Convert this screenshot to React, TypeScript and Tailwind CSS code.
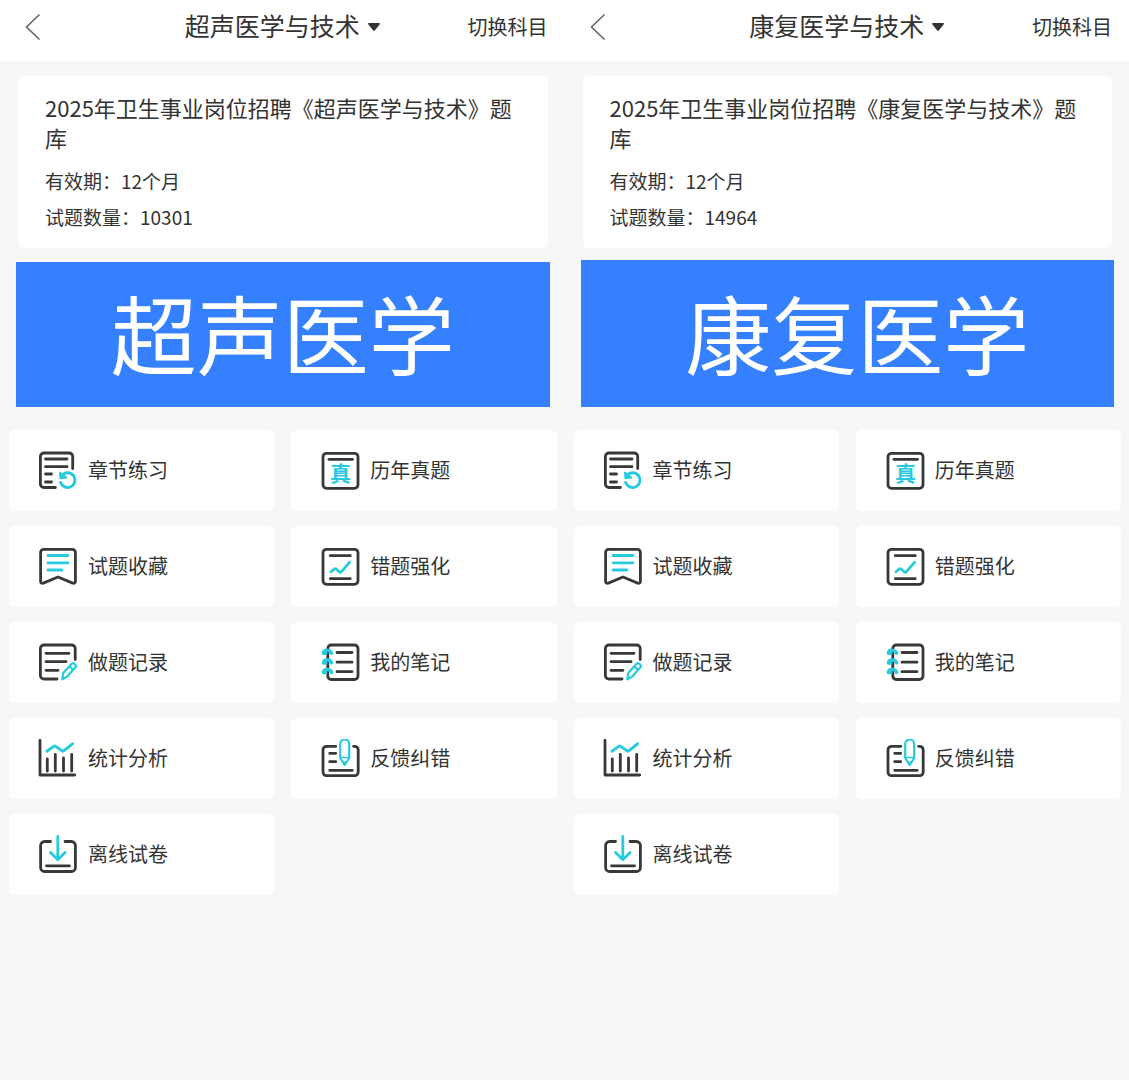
import type { ReactNode } from "react"
import clsx from "clsx"

interface Subject {
  name: string
  title: string
  period: string
  count: number
  banner: string
  bannerClass: string
}

const subjects: Subject[] = [
  {
    name: "超声医学与技术",
    title: "2025年卫生事业岗位招聘《超声医学与技术》题库",
    period: "12个月",
    count: 10301,
    banner: "超声医学",
    bannerClass: "mt-[14px] pt-5",
  },
  {
    name: "康复医学与技术",
    title: "2025年卫生事业岗位招聘《康复医学与技术》题库",
    period: "12个月",
    count: 14964,
    banner: "康复医学",
    bannerClass: "mt-3 pt-[22px] pl-5",
  },
]

const DARK = "#383838"
const CYAN = "#27cbdd"

function Icon({ children }: { children: ReactNode }) {
  return (
    <svg
      viewBox="0 0 40 40"
      className="size-10 shrink-0"
      fill="none"
      stroke={DARK}
      strokeWidth="2.8"
      strokeLinecap="round"
      strokeLinejoin="round"
      aria-hidden="true"
    >
      {children}
    </svg>
  )
}

function ChapterIcon() {
  return (
    <Icon>
      <path d="M34.7 17.5V5.5a3.5 3.5 0 0 0-3.5-3.5H5.9a3.5 3.5 0 0 0-3.5 3.5V33a3.5 3.5 0 0 0 3.5 3.5h11.5" />
      <path d="M7.5 8h21.5M7.5 15.7h21.5M7.5 23h6M7.5 31h6" />
      <g stroke={CYAN}>
        <path d="M22.6 31.5a7.4 7.4 0 1 0 2-7.8" strokeWidth="3" />
        <path d="M21.8 21.4l.4 6 6.3-.8z" fill={CYAN} strokeWidth="1.6" />
      </g>
    </Icon>
  )
}

function PastPaperIcon() {
  return (
    <Icon>
      <rect x="3" y="2.3" width="35" height="35" rx="3.5" />
      <path d="M9 8.3h23.5" />
      <text
        x="20.5"
        y="30"
        textAnchor="middle"
        fontSize="21"
        fontWeight="700"
        fill={CYAN}
        stroke="none"
      >
        真
      </text>
    </Icon>
  )
}

function FavoriteIcon() {
  return (
    <Icon>
      <path d="M2.6 34.5V5.3a3 3 0 0 1 3-3h28.8a3 3 0 0 1 3 3v29.2c0 1.5-1.3 2.3-2.7 1.6L20 30 5.3 36.1C3.9 36.8 2.6 36 2.6 34.5z" />
      <path d="M10 8.5h20M10 15.8h20M10 23h14" stroke={CYAN} />
    </Icon>
  )
}

function MistakeIcon() {
  return (
    <Icon>
      <rect x="3" y="2.3" width="35" height="35" rx="3.5" />
      <path d="M10.3 8.7h20M10.3 31.6h20" />
      <path
        d="M11 24.8l3-2.6c.8-.7 1.7-.7 2.5 0l2.7 2.5c.9.8 1.7.7 2.5-.3l8-9.2"
        stroke={CYAN}
      />
    </Icon>
  )
}

function RecordIcon() {
  return (
    <Icon>
      <path d="M37.2 16.5V5.5a3.5 3.5 0 0 0-3.5-3.5H5.9a3.5 3.5 0 0 0-3.5 3.5v27a3.5 3.5 0 0 0 3.5 3.5H19" />
      <path d="M8 10.3h23M8 18.7h20M8 27.3h12" />
      <g stroke={CYAN} strokeWidth="2.2">
        <path d="M24.3 36.3l.9-6.2 8.5-9.3c.7-.8 1.6-.8 2.4-.1l1.2 1.1c.8.7.8 1.6.1 2.4l-8.3 9.5z" />
        <path d="M31.5 23.5l3.5 3.2" />
      </g>
    </Icon>
  )
}

function NoteIcon() {
  return (
    <Icon>
      <rect x="7.8" y="2" width="30.2" height="34.5" rx="3.5" />
      <path d="M17 9.5h15M17 19.2h15M17 28.7h15" />
      <g stroke={CYAN} strokeWidth="3.4">
        <path d="M11.6 10.2C10.6 6.8 4.6 6.2 3.4 9.6M3.400 10.400h2.400" />
        <path d="M11.6 19.8C10.6 16.4 4.6 15.8 3.4 19.2M3.400 20h2.400" />
        <path d="M11.6 29.4C10.6 26 4.6 25.4 3.4 28.8M3.400 29.600h2.400" />
      </g>
    </Icon>
  )
}

function StatsIcon() {
  return (
    <Icon>
      <path d="M2 1.3V36h34.7" />
      <path d="M9.3 20v12M17.3 15.3V32M25.5 19v13M33.7 15.3V32" />
      <path
        d="M9 12.2l6.7-4.8c.7-.5 1.3-.5 2 0l6.3 4.4c.7.5 1.4.4 2-.1l8.5-6.9"
        stroke={CYAN}
        strokeWidth="3"
      />
    </Icon>
  )
}

function FeedbackIcon() {
  return (
    <Icon>
      <path d="M15.8 7.3H6.6A3.6 3.6 0 0 0 3 10.9v22.2a3.6 3.6 0 0 0 3.6 3.6h28a3.6 3.6 0 0 0 3.6-3.6V10.900a3.600 3.600 0 0 0-3.600-3.600h-1" />
      <path d="M9.7 14.3h6M9.7 22.7h6M9.7 31.3h22.5" />
      <g stroke={CYAN} strokeWidth="2.2">
        <path d="M20.2 5a4.500 4.500 0 0 1 9 0v14l-4.500 7-4.500-7z" />
        <path d="M20.500 18.500h8.400" strokeWidth="1.600" />
        <path d="M23 23h3.400l-1.700 2.600z" fill={CYAN} strokeWidth="1" />
      </g>
    </Icon>
  )
}

function OfflineIcon() {
  return (
    <Icon>
      <path d="M12.500 6.500H6.600A4 4 0 0 0 2.600 10.500v22A4 4 0 0 0 6.600 36.500h26.800a4 4 0 0 0 4-4v-22a4 4 0 0 0-4-4H27" />
      <path d="M8.500 30.800h23" />
      <path d="M19.800 1.500v23M12.500 17.500l7.300 7.300 7.300-7.300" stroke={CYAN} />
    </Icon>
  )
}

const menu = [
  { label: "章节练习", icon: ChapterIcon },
  { label: "历年真题", icon: PastPaperIcon },
  { label: "试题收藏", icon: FavoriteIcon },
  { label: "错题强化", icon: MistakeIcon },
  { label: "做题记录", icon: RecordIcon },
  { label: "我的笔记", icon: NoteIcon },
  { label: "统计分析", icon: StatsIcon },
  { label: "反馈纠错", icon: FeedbackIcon },
  { label: "离线试卷", icon: OfflineIcon },
]

function SubjectScreen({ subject }: { subject: Subject }) {
  return (
    <section>
      <header className="grid h-[61px] grid-cols-[1fr_auto_1fr] items-center bg-white px-[17px] pb-2">
        <button type="button" aria-label="返回" className="justify-self-start px-2">
          <svg
            viewBox="0 0 16 28"
            className="h-7 w-4"
            fill="none"
            stroke="#666"
            strokeWidth="1.6"
            aria-hidden="true"
          >
            <path d="M14.500 1.500L1.500 14l13 12.500" />
          </svg>
        </button>
        <button type="button" className="flex items-center gap-2 text-[25px] leading-9">
          <span className="pb-[3px]">{subject.name}</span>
          <svg viewBox="0 0 12 8" className="h-2 w-3" fill="#333" aria-hidden="true">
            <path d="M.8 0h10.400c.7 0 1 .7.600 1.200L6.800 7.400c-.4.500-1.200.5-1.600 0L.2 1.200C-.2.7.1 0 .8 0z" />
          </svg>
        </button>
        <button type="button" className="justify-self-end text-xl">
          切换科目
        </button>
      </header>

      <div className="mt-[15px] mr-[17px] ml-[18px] rounded-md bg-white px-[27px] pt-4 pb-[13px]">
        <h2 className="text-[22px] leading-[30px]">{subject.title}</h2>
        <div className="mt-[11px] text-[19px] leading-9">
          <p>有效期：{subject.period}</p>
          <p>试题数量：{subject.count}</p>
        </div>
      </div>

      <div
        className={clsx(
          "mr-[15px] ml-4 bg-[#3580ff] pb-[25px] text-center text-[86px] leading-[100px] text-white",
          subject.bannerClass,
        )}
      >
        {subject.banner}
      </div>

      <nav className="mt-[23px] grid grid-cols-2 gap-x-[17px] gap-y-[15px] pr-2 pl-[9px]">
        {menu.map(({ label, icon: MenuIcon }) => (
          <button
            key={label}
            type="button"
            className="flex h-[81px] items-center gap-[10px] rounded-md bg-white pl-[29px] text-xl"
          >
            <MenuIcon />
            <span className="pb-0.5">{label}</span>
          </button>
        ))}
      </nav>
    </section>
  )
}

export default function App() {
  return (
    <main
      lang="zh-CN"
      className="grid min-h-screen grid-cols-2 bg-[#f7f7f7] font-['Noto_Sans_CJK_SC',sans-serif] text-[#333]"
    >
      {subjects.map((subject) => (
        <SubjectScreen key={subject.name} subject={subject} />
      ))}
    </main>
  )
}
